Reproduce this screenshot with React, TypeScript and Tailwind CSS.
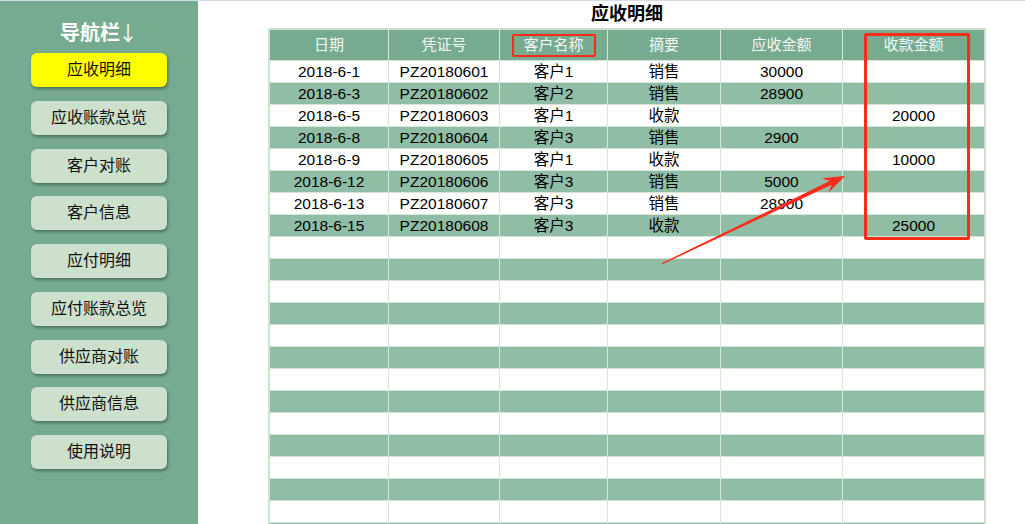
import React from 'react';

const navItems = [
  '应收明细',
  '应收账款总览',
  '客户对账',
  '客户信息',
  '应付明细',
  '应付账款总览',
  '供应商对账',
  '供应商信息',
  '使用说明',
];

const columns = ['日期', '凭证号', '客户名称', '摘要', '应收金额', '收款金额'];

const rows = [
  ['2018-6-1', 'PZ20180601', '客户1', '销售', '30000', ''],
  ['2018-6-3', 'PZ20180602', '客户2', '销售', '28900', ''],
  ['2018-6-5', 'PZ20180603', '客户1', '收款', '', '20000'],
  ['2018-6-8', 'PZ20180604', '客户3', '销售', '2900', ''],
  ['2018-6-9', 'PZ20180605', '客户1', '收款', '', '10000'],
  ['2018-6-12', 'PZ20180606', '客户3', '销售', '5000', ''],
  ['2018-6-13', 'PZ20180607', '客户3', '销售', '28900', ''],
  ['2018-6-15', 'PZ20180608', '客户3', '收款', '', '25000'],
];

const emptyRows = Array.from({ length: 14 }, () => ['', '', '', '', '', '']);
const allRows = [...rows, ...emptyRows];

const grid = 'grid grid-cols-[119px_111px_108px_113px_122px_141px]';

const Sidebar = () => (
  <aside className="w-[198px] shrink-0 bg-[#76ab90] flex flex-col items-center pt-[20px]">
    <div className="h-[24px] leading-[24px] text-[20px] font-bold text-white flex items-center">
      导航栏
      <span className="font-normal text-[20px] font-['Noto_Sans_CJK_SC'] -ml-[2px]">↓</span>
    </div>
    <nav className="mt-[8px] flex flex-col gap-[13.75px]">
      {navItems.map((item, i) => (
        <button
          key={item}
          className={`w-[136px] h-[34px] rounded-[6px] text-[16px] text-[#111] shadow-[1px_2px_3px_rgba(0,0,0,0.35)] ${
            i === 0 ? 'bg-[#ffff00]' : 'bg-[#cde0cc]'
          }`}
        >
          {item}
        </button>
      ))}
    </nav>
  </aside>
);

const Table = () => (
  <div className="w-[718px] border-x-2 border-t-2 border-[#cfe0cf] text-[15px]">
    {/* header */}
    <div className={`${grid} h-[31px] bg-[#76ab90] text-[#f4f8f4] border-b border-[#d5e6d5]`}>
      {columns.map((c, i) => (
        <div
          key={c}
          className={`flex items-center justify-center ${i < 5 ? 'border-r border-[#d5e6d5]' : ''}`}
        >
          {c === '客户名称' ? (
            <span className="w-[84px] h-[23px] flex items-center justify-center border-2 border-[#ff2a1a] rounded-[2px]">
              {c}
            </span>
          ) : (
            c
          )}
        </div>
      ))}
    </div>
    {allRows.map((r, ri) => (
      <div
        key={ri}
        className={`${grid} h-[22px] border-b border-[#d5e6d5] text-black text-[15.5px] ${
          ri % 2 === 1 ? 'bg-[#90bda5]' : 'bg-white'
        }`}
      >
        {r.map((v, ci) => (
          <div
            key={ci}
            className={`flex items-center justify-center leading-none ${ci < 5 ? 'border-r border-[#d5e6d5]' : ''}`}
          >
            {v}
          </div>
        ))}
      </div>
    ))}
  </div>
);

const App = () => {
  return (
    <div
      className="relative w-[1025px] h-[524px] overflow-hidden bg-white border-t border-[#d6dbe6] flex"
      style={{ fontFamily: '"Liberation Sans", "Noto Sans CJK SC", sans-serif' }}
    >
      <Sidebar />
      <main className="pl-[70px] flex flex-col">
        <div className="w-[718px] h-[28px] flex items-center justify-center text-[18px] font-bold text-black">
          应收明细
        </div>
        <Table />
      </main>

      {/* annotation: box around 收款金额 column */}
      <div className="absolute left-[864px] top-[32px] w-[106px] h-[207px] border-[3px] border-[#ff2a1a] rounded-[2px] pointer-events-none" />

      {/* annotation: arrow */}
      <svg className="absolute inset-0 pointer-events-none" width="1025" height="524" viewBox="0 0 1025 524">
        <polygon
          fill="#ff2a1a"
          points="662,262 829.7,180.1 821.7,177.2 845,175 828.5,191.6 831.5,183.7 663,263"
        />
      </svg>
    </div>
  );
};

export default App;
